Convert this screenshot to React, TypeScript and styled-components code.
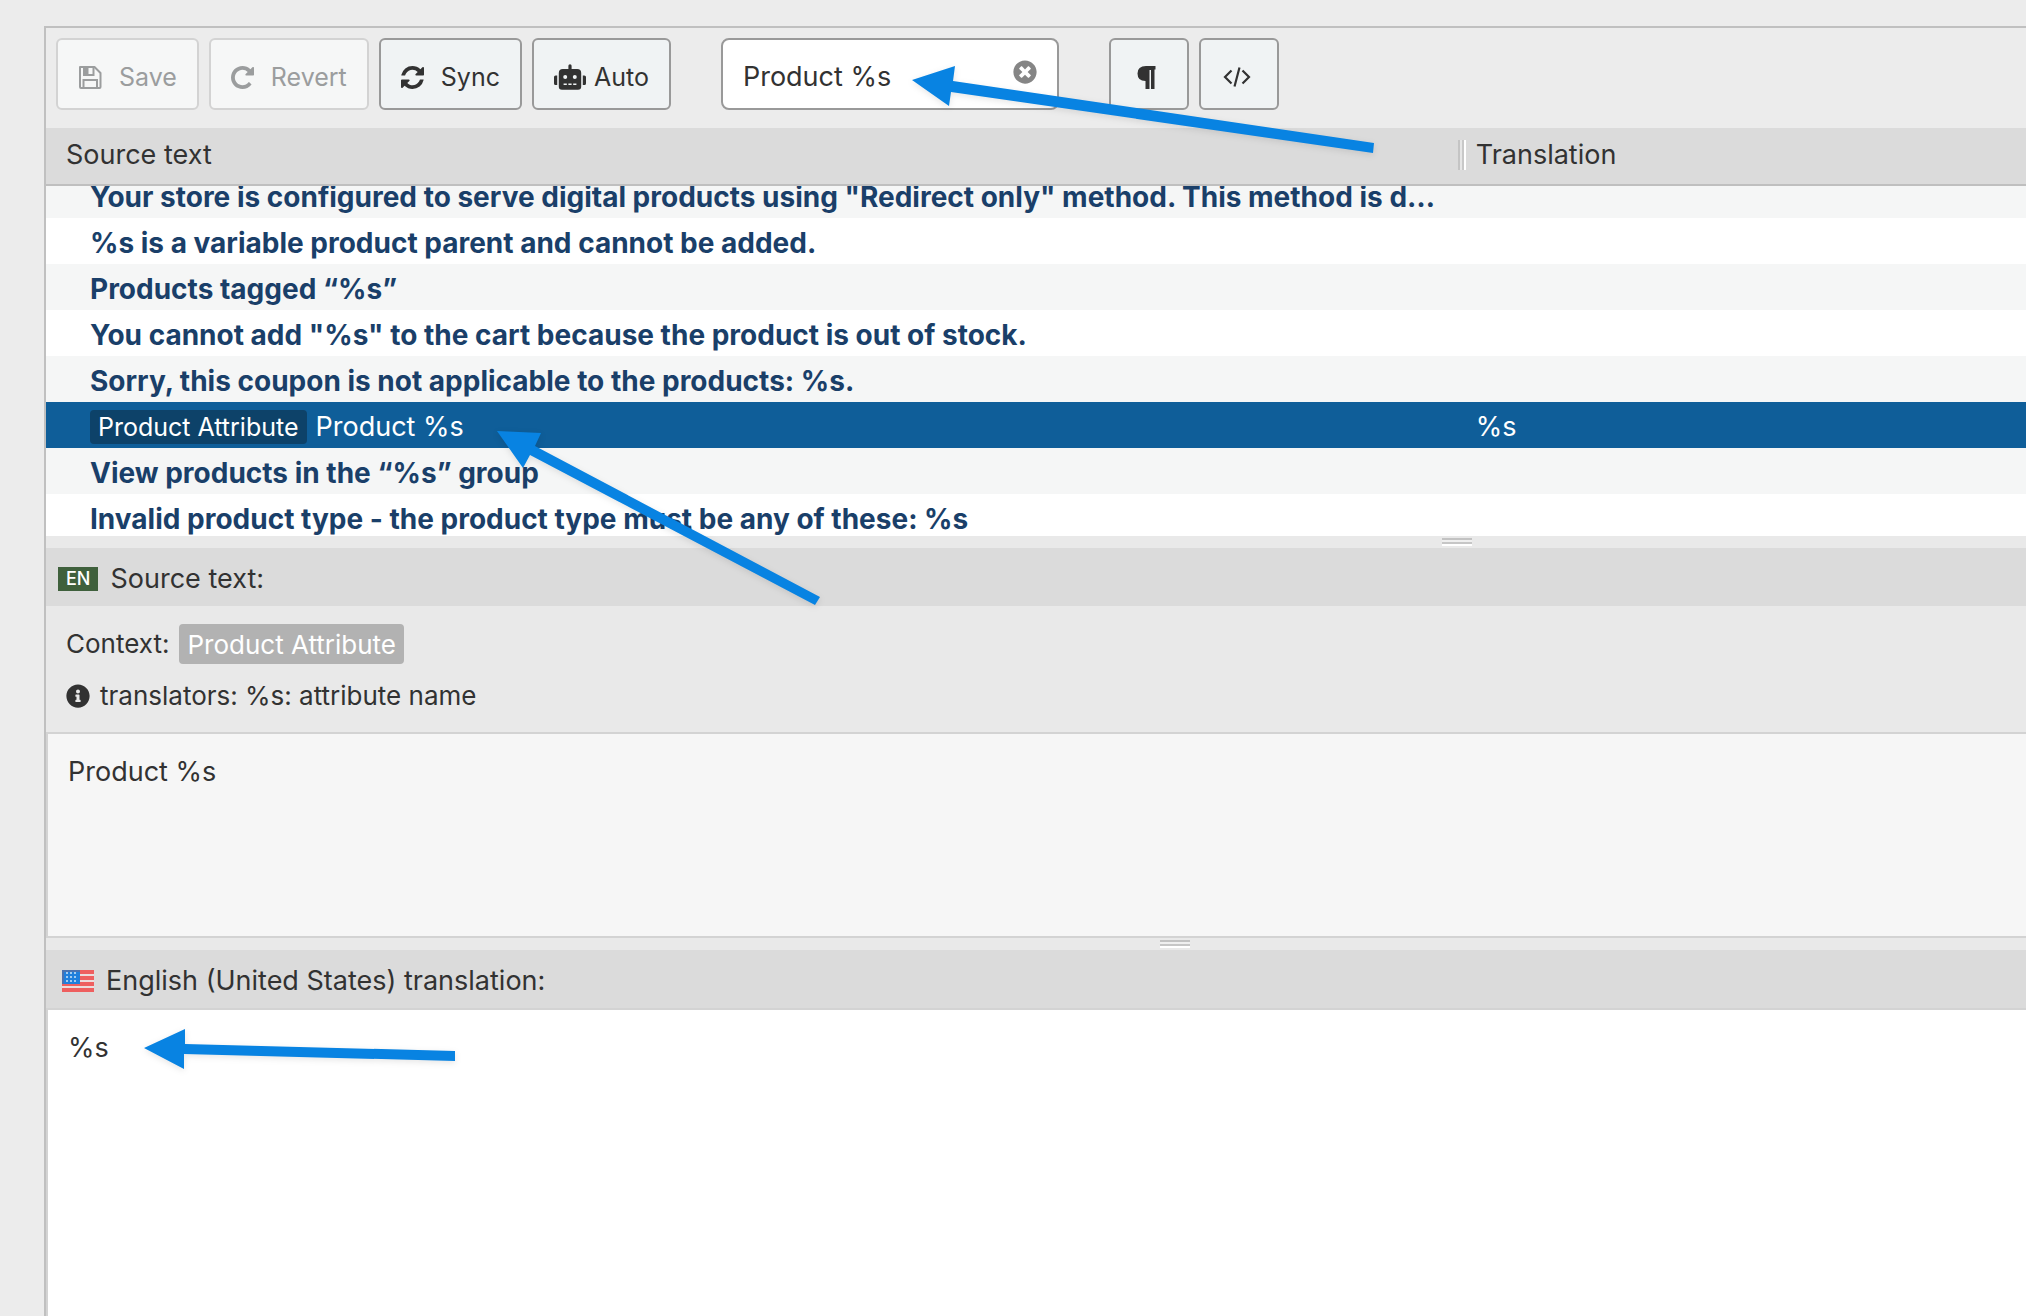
import React, { useLayoutEffect, useRef, useState } from "react";
import styled, { createGlobalStyle } from "styled-components";
import { FaRobot, FaInfoCircle, FaTimesCircle } from "react-icons/fa";

const GlobalStyle = createGlobalStyle`
  *, *::before, *::after { box-sizing: border-box; }
  html, body, #root { height: 100%; }
  body {
    margin: 0;
    background: #ececec;
    color: #323232;
    font-family: Inter, "Liberation Sans", sans-serif;
    font-size: 27px;
    line-height: 32px;
    overflow: hidden;
  }
`;

const Page = styled.div`
  position: relative;
  display: flex;
  height: 100%;
  padding: 26px 0 0 44px;
  overflow: hidden;
`;

const Editor = styled.main`
  flex: 1;
  min-width: 0;
  display: flex;
  flex-direction: column;
  border: 2px solid #c0c0c0;
  border-width: 2px 0 0 2px;
`;

const Toolbar = styled.div`
  display: flex;
  align-items: flex-start;
  gap: 50px;
  padding: 10px 10px 18px;
`;

const ToolGroup = styled.div`
  display: flex;
  gap: 10px;
`;

const ToolButton = styled.button<{ $tight?: boolean }>`
  display: flex;
  align-items: center;
  justify-content: center;
  gap: ${(p) => (p.$tight ? 8 : 17)}px;
  height: 72px;
  padding: 6px 20px 0;
  border: 2px solid #999;
  border-radius: 6px;
  background: #f0f3f4;
  color: #323232;
  font: inherit;
  font-size: 25px;
  line-height: 32px;

  &:disabled {
    border-color: #d3d3d3;
    background: #f6f7f7;
    color: #9b9d9e;
  }
`;

const IconButton = styled(ToolButton)`
  width: 80px;
  padding: 6px 4px 0 0;
`;

const SearchBox = styled.form`
  display: flex;
  align-items: center;
  width: 338px;
  height: 72px;
  padding: 0 20px;
  border: 2px solid #999;
  border-radius: 8px;
  background: #fff;
`;

const SearchInput = styled.input`
  flex: 1;
  min-width: 0;
  padding: 6px 0 0;
  border: 0;
  outline: 0;
  background: transparent;
  color: inherit;
  font: inherit;
`;

const ClearButton = styled.button`
  display: flex;
  padding: 0 0 4px;
  border: 0;
  background: transparent;
  color: #858585;
`;

const ListPane = styled.div`
  flex: none;
  height: 408px;
  overflow-x: hidden;
  overflow-y: auto;
  scrollbar-width: none;
  background: #fff;
`;

const MessageTable = styled.table`
  width: 100%;
  table-layout: fixed;
  border-collapse: separate;
  border-spacing: 0;
`;

const HeadCell = styled.th<{ $width?: string }>`
  position: sticky;
  top: 0;
  z-index: 1;
  width: ${(p) => p.$width ?? "auto"};
  height: 58px;
  padding: 0 0 2px;
  border-bottom: 2px solid #bfbfbf;
  background: #dbdbdb;
  font-weight: 400;
  text-align: left;
`;

const HeadLabel = styled.div<{ $inset: number }>`
  display: flex;
  align-items: center;
  gap: 10px;
  padding-left: ${(p) => p.$inset}px;
`;

const ColumnGrip = styled.span`
  width: 8px;
  height: 30px;
  background: linear-gradient(
    90deg,
    #c4c4c4 0 2px,
    #e6e6e6 2px 4px,
    #c8c8c8 4px 6px,
    #fff 6px 8px
  );
`;

const MessageRow = styled.tr<{ $selected?: boolean }>`
  background: ${(p) => (p.$selected ? "#0f5e99" : "#fff")};
  color: ${(p) => (p.$selected ? "#fff" : "#1a3f69")};
  font-size: ${(p) => (p.$selected ? 27 : 28)}px;
  font-weight: ${(p) => (p.$selected ? 400 : 700)};

  &:nth-child(odd) {
    background: #f5f6f6;
  }
`;

const MessageCell = styled.td<{ $inset: number }>`
  height: 46px;
  padding: 3px 0 0 ${(p) => p.$inset}px;
  overflow: hidden;
  white-space: nowrap;
  text-overflow: ellipsis;
`;

const RowTag = styled.span`
  display: inline-block;
  margin-right: 9px;
  padding: 0 8px;
  border-radius: 4px;
  background: #0d4269;
  font-size: 25px;
  line-height: 34px;
`;

const Splitter = styled.div<{ $before: number; $behind: number }>`
  flex: none;
  display: grid;
  grid-template-columns: ${(p) => p.$before}fr 30px ${(p) => p.$behind}fr;
  height: 12px;
  padding: 2px 0;
  background: #e9e9e9;
`;

const SplitterGrip = styled.span`
  grid-column: 2;
  background: linear-gradient(
    #c2c2c2 0 2px,
    #efefef 2px 4px,
    #c6c6c6 4px 6px,
    #fff 6px 8px
  );
`;

const PaneHeader = styled.label<{ $inset: number }>`
  flex: none;
  display: flex;
  align-items: center;
  gap: 12px;
  height: 58px;
  padding: 4px 0 0 ${(p) => p.$inset}px;
  background: #dbdbdb;
`;

const LanguageBadge = styled.span`
  padding: 0 8px;
  background: #3f603c;
  color: #fff;
  font-size: 18px;
  font-weight: 500;
  line-height: 24px;
`;

const ContextPane = styled.div`
  flex: none;
  display: flex;
  flex-direction: column;
  gap: 16px;
  padding: 18px 20px 20px;
  background: #e9e9e9;
  font-size: 26px;
`;

const ContextLine = styled.div`
  display: flex;
  align-items: center;
  gap: 10px;
`;

const ContextTag = styled.span`
  padding: 2px 8px 0;
  border-radius: 4px;
  background: #b2b2b2;
  color: #fff;
  line-height: 38px;
`;

const TextPane = styled.textarea<{ $fill?: boolean }>`
  display: block;
  flex: ${(p) => (p.$fill ? "1 1 0" : "none")};
  width: 100%;
  height: ${(p) => (p.$fill ? "auto" : "206px")};
  padding: 22px 20px;
  border: 2px solid #d3d3d3;
  border-right-width: 0;
  border-bottom-width: ${(p) => (p.$fill ? 0 : 2)}px;
  border-radius: 0;
  outline: 0;
  resize: none;
  background: ${(p) => (p.$fill ? "#fff" : "#f6f6f6")};
  color: inherit;
  font: inherit;
`;

const ArrowLayer = styled.svg`
  position: absolute;
  top: 0;
  left: 0;
  z-index: 2;
  pointer-events: none;
  filter: drop-shadow(0 2px 3px rgba(0, 0, 0, 0.1));
`;

const SaveIcon = () => (
  <svg width="24" height="24" viewBox="0 0 24 24" fill="none" stroke="currentColor" strokeWidth="2">
    <path d="M2 2h14.500l6 6V22q0 1-1 1H3q-1 0-1-1z" strokeLinejoin="round" />
    <path d="M6 2v8h9.500V2M5.500 23v-8h13.500v8" />
    <path d="M6 2h4.500v8H6z" fill="currentColor" stroke="none" />
  </svg>
);

const RevertIcon = () => (
  <svg width="23" height="23" viewBox="0 0 1536 1536" fill="currentColor">
    <path d="M1536 128v448q0 26-19 45t-45 19h-448q-42 0-59-40-17-39 14-69l138-138q-148-137-349-137-104 0-198.500 40.500t-163.500 109.500-109.500 163.500-40.500 198.500 40.500 198.500 109.500 163.500 163.500 109.500 198.500 40.500q119 0 225-52t179-147q7-10 23-12 15 0 25 9l137 138q9 8 9.500 20.500t-7.500 22.500q-109 132-264 204.500t-327 72.500q-156 0-298-61t-245-164-164-245-61-298 61-298 164-245 245-164 298-61q147 0 284.500 55.500t244.500 156.500l130-129q29-31 70-14 39 17 39 59z" />
  </svg>
);

const SyncIcon = () => (
  <svg width="23" height="23" viewBox="0 0 1536 1536" fill="currentColor">
    <path d="M1511 928q0 5-1 7-64 268-268 434.500T764 1536q-146 0-282.500-55T238 1324l-129 129q-19 19-45 19t-45-19-19-45V960q0-26 19-45t45-19h448q26 0 45 19t19 45-19 45l-137 137q71 66 161 102t187 36q134 0 250-65t186-179q11-17 53-117 8-23 30-23h192q13 0 22.500 9.500t9.500 22.500zm25-800v448q0 26-19 45t-45 19h-448q-26 0-45-19t-19-45 19-45l138-138Q969 256 768 256q-134 0-250 65T332 500q-11 17-53 117-8 23-30 23H50q-13 0-22.500-9.500T18 608v-7q65-268 270-434.500T768 0q146 0 284 55.500T1297 212l130-129q19-19 45-19t45 19 19 45z" />
  </svg>
);

const PilcrowIcon = () => (
  <svg width="20" height="24" viewBox="0 0 20 24" fill="currentColor">
    <path d="M9 1h9.500v3.500h-1V24h-3.500V5h-1.500v19H8.500v-8Q.5 16 .5 8.500T9 1z" />
  </svg>
);

const CodeIcon = () => (
  <svg width="28" height="22" viewBox="0 0 28 22" fill="none" stroke="currentColor" strokeWidth="2.200">
    <path d="M8.500 4.500L2 11l6.500 6.500M19.500 4.500L26 11l-6.500 6.500M16.500 1.500l-5 19" />
  </svg>
);

const FlagIcon = () => (
  <svg width="32" height="22" viewBox="0 0 32 22">
    <rect width="32" height="22" fill="#ecdcdc" />
    {[0, 6, 12, 18].map((y) => (
      <rect key={y} y={y} width="32" height="4" fill="#ee5f5f" />
    ))}
    <rect width="18" height="14" fill="#1f7fdc" />
    {[3, 7, 11].map((y) =>
      [5, 9, 13].map((x) => <circle key={`${x}-${y}`} cx={x} cy={y} r="1" fill="#cfe4f7" />)
    )}
    <path d="M0 1h18M1 0v14" stroke="#4a72b0" strokeWidth="2" />
  </svg>
);

interface Message {
  source: string;
  tag?: string;
  translation?: string;
}

const messages: Message[] = [
  {
    source:
      'Your store is configured to serve digital products using "Redirect only" method. This method is d…',
  },
  { source: "%s is a variable product parent and cannot be added." },
  { source: "Products tagged “%s”" },
  { source: 'You cannot add "%s" to the cart because the product is out of stock.' },
  { source: "Sorry, this coupon is not applicable to the products: %s." },
  { source: "Product %s", tag: "Product Attribute", translation: "%s" },
  { source: "View products in the “%s” group" },
  { source: "Invalid product type - the product type must be any of these: %s" },
];

const arrows = [
  "912,80 955,66 953,81 1374,143 1373,153 951,92 949,106",
  "497,431 541,433 535,446 820,597 815,605 530,455 523,468",
  "144,1048 185,1029 185,1044 455,1051 455,1061 184,1054 184,1069",
];

export default function App() {
  const [query, setQuery] = useState("Product %s");
  const [translation, setTranslation] = useState("%s");
  const list = useRef<HTMLDivElement>(null);

  useLayoutEffect(() => {
    if (list.current) list.current.scrollTop = 14;
  }, []);

  return (
    <Page>
      <GlobalStyle />
      <Editor>
        <Toolbar>
          <ToolGroup>
            <ToolButton disabled>
              <SaveIcon />
              Save
            </ToolButton>
            <ToolButton disabled>
              <RevertIcon />
              Revert
            </ToolButton>
            <ToolButton>
              <SyncIcon />
              Sync
            </ToolButton>
            <ToolButton $tight>
              <FaRobot size={32} />
              Auto
            </ToolButton>
          </ToolGroup>
          <SearchBox onSubmit={(e) => e.preventDefault()}>
            <SearchInput
              aria-label="Filter translations"
              value={query}
              onChange={(e) => setQuery(e.target.value)}
            />
            <ClearButton type="button" aria-label="Clear filter" onClick={() => setQuery("")}>
              <FaTimesCircle size={24} />
            </ClearButton>
          </SearchBox>
          <ToolGroup>
            <IconButton aria-label="Toggle invisibles">
              <PilcrowIcon />
            </IconButton>
            <IconButton aria-label="Toggle code view">
              <CodeIcon />
            </IconButton>
          </ToolGroup>
        </Toolbar>

        <ListPane ref={list}>
          <MessageTable>
            <thead>
              <tr>
                <HeadCell $width="71.3%">
                  <HeadLabel $inset={20}>Source text</HeadLabel>
                </HeadCell>
                <HeadCell>
                  <HeadLabel $inset={0}>
                    <ColumnGrip />
                    Translation
                  </HeadLabel>
                </HeadCell>
              </tr>
            </thead>
            <tbody>
              {messages.map((m) => (
                <MessageRow
                  key={m.source}
                  $selected={m.tag !== undefined}
                  aria-selected={m.tag !== undefined}
                >
                  <MessageCell $inset={44}>
                    {m.tag && <RowTag>{m.tag}</RowTag>}
                    {m.source}
                  </MessageCell>
                  <MessageCell $inset={18}>{m.translation}</MessageCell>
                </MessageRow>
              ))}
            </tbody>
          </MessageTable>
        </ListPane>

        <Splitter $before={1396} $behind={554}>
          <SplitterGrip />
        </Splitter>

        <PaneHeader htmlFor="source" $inset={12}>
          <LanguageBadge>EN</LanguageBadge>
          Source text:
        </PaneHeader>
        <ContextPane>
          <ContextLine>
            Context: <ContextTag>Product Attribute</ContextTag>
          </ContextLine>
          <ContextLine>
            <FaInfoCircle size={24} />
            translators: %s: attribute name
          </ContextLine>
        </ContextPane>
        <TextPane id="source" readOnly value="Product %s" />

        <Splitter $before={1114} $behind={836}>
          <SplitterGrip />
        </Splitter>

        <PaneHeader htmlFor="translation" $inset={16}>
          <FlagIcon />
          English (United States) translation:
        </PaneHeader>
        <TextPane
          id="translation"
          $fill
          value={translation}
          onChange={(e) => setTranslation(e.target.value)}
        />
      </Editor>

      <ArrowLayer width="1400" height="1100" viewBox="0 0 1400 1100" fill="#0883e2" aria-hidden="true">
        {arrows.map((points) => (
          <polygon key={points} points={points} />
        ))}
      </ArrowLayer>
    </Page>
  );
}
